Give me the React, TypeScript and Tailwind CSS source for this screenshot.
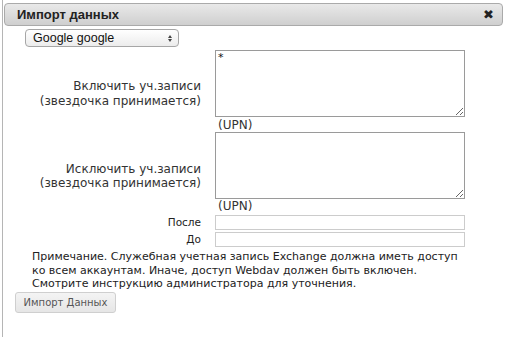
export default function App() {
  const font = { fontFamily: '"DejaVu Sans", Verdana, sans-serif' }
  const uiFont = { fontFamily: '"Liberation Sans", Arial, sans-serif' }

  return (
    <div className="w-[506px] h-[337px] bg-white overflow-hidden text-[11px] text-[#333]" style={font}>
      <div className="ml-[2px] h-full border-l border-[#b5b5b5] flex flex-col">
        {/* title bar */}
        <div className="mt-[3px] ml-[1px] mr-[3px] h-[23px] rounded-[4px] border border-[#aaaaaa] bg-linear-to-b from-[#e9e9e9] to-[#cfcfcf] flex items-center justify-between pl-[12px] pr-[8px]">
          <span className="text-[13px] font-bold text-[#222]" style={uiFont}>Импорт данных</span>
          <span className="text-[13px] leading-none text-[#222]">✖</span>
        </div>

        {/* select */}
        <div
          className="mt-[3px] ml-[22px] w-[154px] h-[18px] rounded-[4px] border border-[#a6a6a6] bg-linear-to-b from-white to-[#ececec] flex items-center justify-between pl-[7px] pr-[6px] text-[12.5px] text-[#111]"
          style={uiFont}
        >
          <span>Google google</span>
          <span className="flex flex-col items-center gap-[1px]">
            <span className="block w-0 h-0 border-x-[2.5px] border-x-transparent border-b-[3px] border-b-[#444]" />
            <span className="block w-0 h-0 border-x-[2.5px] border-x-transparent border-t-[3px] border-t-[#444]" />
          </span>
        </div>

        {/* form grid */}
        <div className="mt-[3px] grid grid-cols-[198px_250px] gap-x-[14px] leading-[14.5px]">
          <div className="flex flex-col justify-center items-end text-right pt-[5px] text-[12px]">
            <span>Включить уч.записи</span>
            <span>(звездочка принимается)</span>
          </div>
          <div className="flex flex-col">
            <textarea
              defaultValue="*"
              className="h-[67px] w-[250px] border border-[#9a9a9a] px-[2px] py-0 text-[11px] leading-[13px] text-[#111] outline-none resize"
              style={font}
            />
            <span className="pl-[3px] h-[15px] leading-[17px] text-[12px]">(UPN)</span>
          </div>

          <div className="flex flex-col justify-center items-end text-right pt-[6px] text-[12px]">
            <span>Исключить уч.записи</span>
            <span>(звездочка принимается)</span>
          </div>
          <div className="flex flex-col">
            <textarea
              className="h-[67px] w-[250px] border border-[#9a9a9a] px-[2px] py-0 text-[11px] text-[#111] outline-none resize"
              style={font}
            />
            <span className="pl-[3px] h-[15px] leading-[15px] text-[12px]">(UPN)</span>
          </div>

          <div className="text-right mt-[1px] h-[15px] leading-[15px] text-[10.5px] text-[#222]">После</div>
          <input className="mt-[1px] h-[15px] w-[250px] border border-[#cccccc] outline-none" />

          <div className="text-right mt-[2px] h-[15px] leading-[15px] text-[10.5px] text-[#222]">До</div>
          <input className="mt-[2px] h-[15px] w-[250px] border border-[#cccccc] outline-none" />
        </div>

        {/* note */}
        <p className="mt-[3px] ml-[29px] leading-[13.5px] text-[#222]">
          Примечание. Служебная учетная запись Exchange должна иметь доступ
          <br />
          ко всем аккаунтам. Иначе, доступ Webdav должен быть включен.
          <br />
          Смотрите инструкцию администратора для уточнения.
        </p>

        {/* action */}
        <div className="mt-[1px] ml-[12px]">
          <button
            className="h-[21px] w-[101px] rounded-[3px] border border-[#cfcfcf] bg-linear-to-b from-[#f4f4f4] to-[#e6e6e6] text-[10px] text-[#555]"
            style={font}
          >
            Импорт Данных
          </button>
        </div>
      </div>
    </div>
  )
}
